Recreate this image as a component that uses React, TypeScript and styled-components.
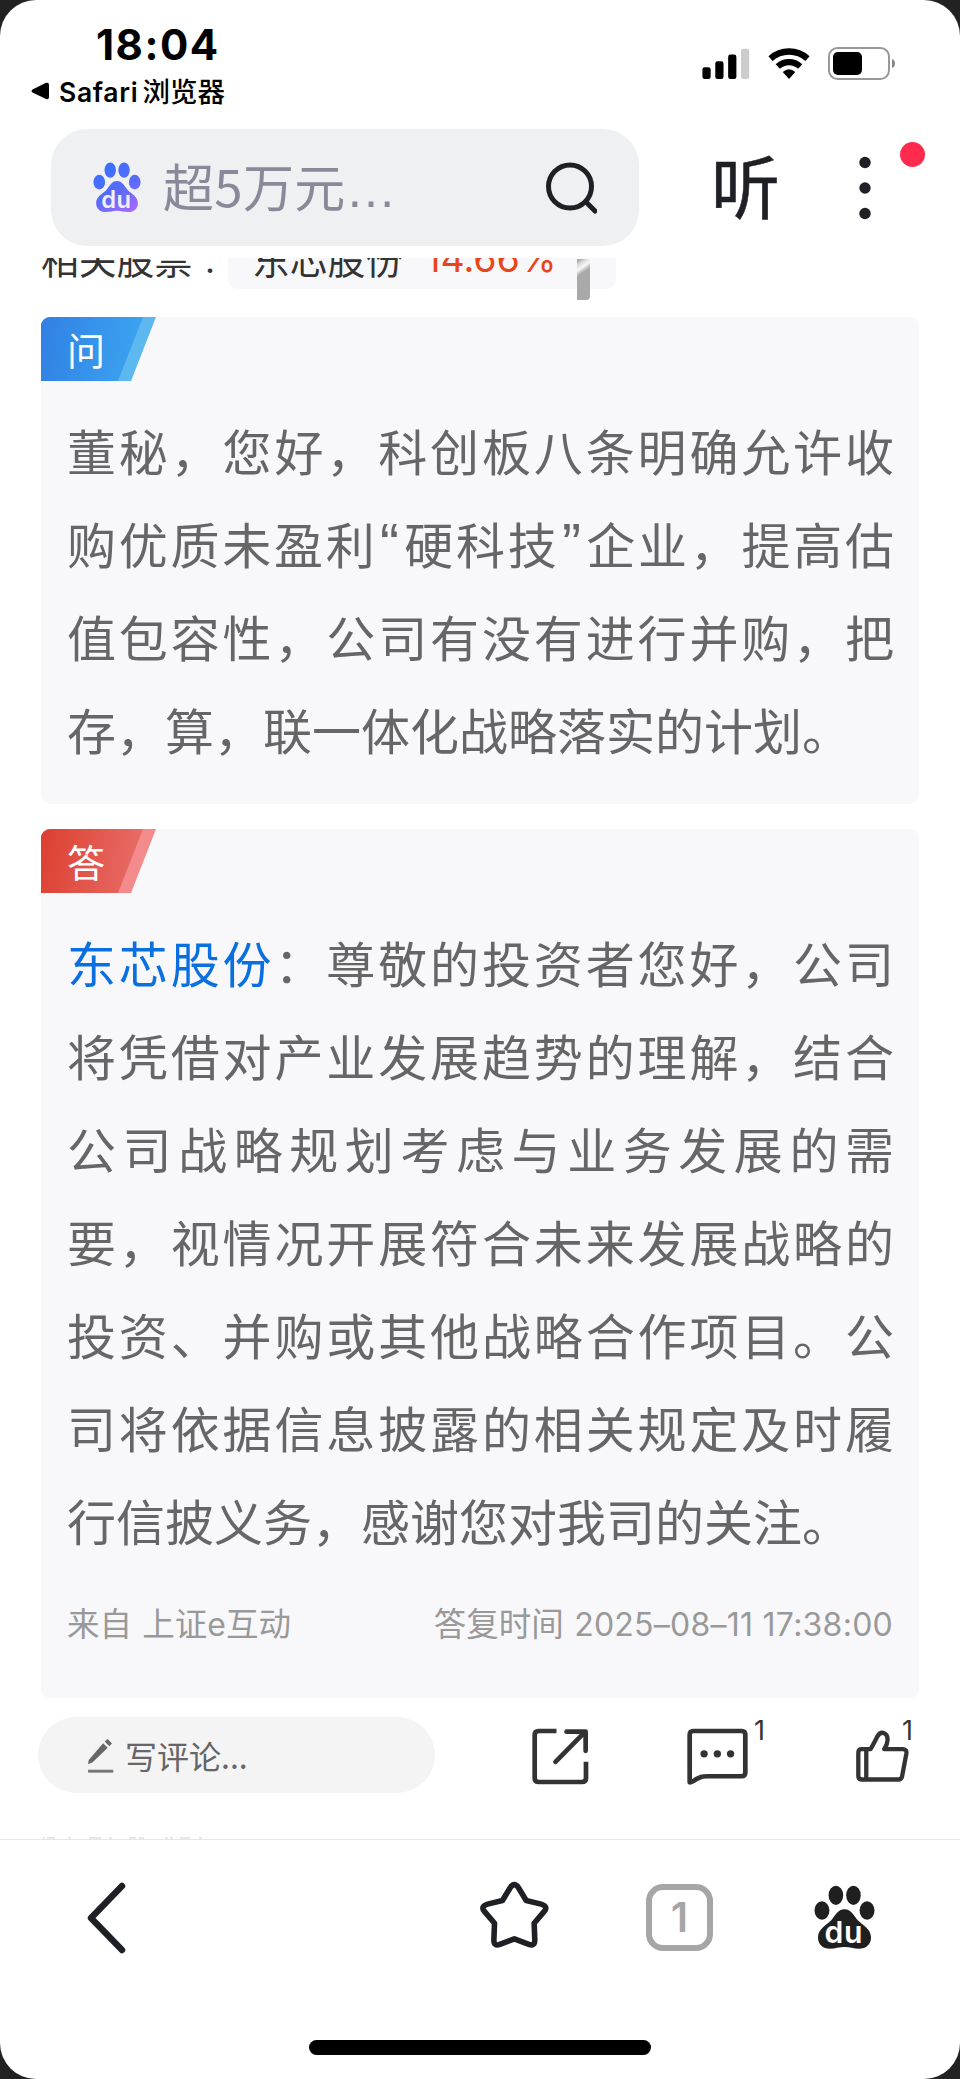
import React from 'react';
import styled, { createGlobalStyle } from 'styled-components';

const cjk = '"Noto Sans CJK SC", sans-serif';
const latin = 'Inter, "Noto Sans CJK SC", sans-serif';

const GlobalStyle = createGlobalStyle`
  * { box-sizing: border-box; }
  body { margin: 0; background: #222; font-family: ${cjk}; }
  svg { display: block; flex: none; }
`;

const Screen = styled.div`
  display: flex;
  flex-direction: column;
  width: 960px;
  height: 2079px;
  border-radius: 36px;
  background: #fff;
  overflow: hidden;
`;

/* ---------- status bar ---------- */

const StatusBar = styled.header`
  display: flex;
  justify-content: space-between;
  height: 129px;
  padding: 24px 65px 0 31px;
  color: #000;
  font-family: ${latin};
`;

const StatusLeft = styled.div`
  display: flex;
  flex-direction: column;
  gap: 10px;
`;

const Clock = styled.div`
  padding-left: 65px;
  font-size: 42px;
  font-weight: 700;
  line-height: 41px;
  letter-spacing: 1.5px;
`;

const BackToApp = styled.div`
  display: flex;
  align-items: center;
  gap: 9px;
  font-size: 26.5px;
  font-weight: 600;
  line-height: 30px;
  letter-spacing: 0.7px;
  white-space: nowrap;
`;

const AppName = styled.span`
  font-family: "Noto Sans CJK SC", sans-serif;
  font-weight: 500;
  font-size: 27.5px;
  margin-left: 4px;
  letter-spacing: 0;
`;

const StatusIcons = styled.div`
  display: flex;
  align-items: center;
  gap: 18px;
  height: 33px;
  margin-top: 23px;
`;

/* ---------- search header ---------- */

const SearchRow = styled.div`
  display: flex;
  align-items: center;
  flex: none;
  height: 117px;
  margin-bottom: 12px;
  padding-left: 51px;
`;

const SearchBox = styled.div`
  display: flex;
  align-items: center;
  width: 588px;
  height: 117px;
  padding: 0 42px;
  border-radius: 36px;
  background: #eff0f2;
`;

const SearchText = styled.span`
  flex: 1;
  margin-left: 22px;
  color: #888a99;
  font-size: 51px;
  line-height: 60px;
  letter-spacing: 0.3px;
`;

const Ellipsis = styled.span`
  font-family: "Liberation Sans", sans-serif;
`;

const Listen = styled.span`
  margin-left: 72px;
  padding-bottom: 7px;
  color: #1f2026;
  font-size: 69px;
  line-height: 80px;
  font-weight: 400;
  -webkit-text-stroke: 0.6px #1f2026;
`;

const Menu = styled.div`
  position: relative;
  margin-left: 79px;
`;

const Badge = styled.i`
  position: absolute;
  left: 41px;
  top: -14px;
  width: 25px;
  height: 25px;
  border-radius: 50%;
  background: #ff2a4d;
`;

/* ---------- article ---------- */

const Article = styled.main`
  display: flex;
  flex-direction: column;
  flex: none;
  height: 1581px;
  padding: 0 41px;
  overflow: hidden;
`;

const Related = styled.div`
  display: flex;
  flex: none;
  height: 59px;
  overflow: hidden;
  color: #333;
  font-size: 37.8px;
  line-height: 57px;
`;

const RelatedLabel = styled.span`
  display: flex;
  width: 187px;
  margin-top: -29px;
  white-space: nowrap;
`;

const Colon = styled.span`
  width: 36px;
  font-family: "Noto Sans CJK TC", sans-serif;
  font-size: 30px;
  line-height: 65px;
  text-align: center;
`;

const StockChip = styled.div`
  display: flex;
  width: 388px;
  height: 60px;
  margin-top: -29px;
  padding-left: 24px;
  border-radius: 10px;
  background: #f8f8fb;
`;

const Change = styled.span`
  margin-left: 22px;
  color: #e8461a;
  font-family: ${latin};
  font-size: 37.5px;
  line-height: 60px;
`;

const ScrollMark = styled.div`
  width: 13px;
  height: 41px;
  margin: 1px 0 0 -39px;
  border-radius: 0 0 4px 0;
  background: linear-gradient(145deg, #aaa 4%, #ddd 14%, #f8f8f8 24%, #ccc 30%, #a9a9a9 36%);
`;

const Card = styled.section`
  flex: none;
  margin-bottom: 25px;
  padding-bottom: 29px;
  border-radius: 9px;
  background: #f8f8fb;
  overflow: hidden;
`;

const tones = {
  ask: { edge: '#5cb8ef', face: 'linear-gradient(100deg, #3180e3, #3ca6f2)' },
  reply: { edge: '#f38b8d', face: 'linear-gradient(100deg, #dc3f30, #e96f6b)' },
};

const Tag = styled.div<{ $tone: 'ask' | 'reply' }>`
  width: 115px;
  height: 64px;
  background: ${p => tones[p.$tone].edge};
  clip-path: polygon(0 0, 100% 0, 90px 100%, 0 100%);
`;

const TagFace = styled.div<{ $tone: 'ask' | 'reply' }>`
  width: 102px;
  height: 64px;
  padding-left: 26px;
  background: ${p => tones[p.$tone].face};
  clip-path: polygon(0 0, 100% 0, 77px 100%, 0 100%);
  color: #fff;
  font-size: 38px;
  line-height: 63px;
`;

const Body = styled.div`
  margin: 22px 25px 0 26px;
  color: #666;
  font-size: 49px;
  line-height: 93px;
`;

const Line = styled.div<{ $last?: boolean }>`
  height: 93px;
  text-align: ${p => (p.$last ? 'left' : 'justify')};
  text-align-last: ${p => (p.$last ? 'left' : 'justify')};
`;

const Quote = styled.span`
  padding: 0 2.5px;
  font-family: "Liberation Sans", sans-serif;
  font-size: 57px;
  line-height: 1;
`;

const Company = styled.span`
  color: #0a70e0;
`;

const Meta = styled.div`
  display: flex;
  justify-content: space-between;
  height: 103px;
  padding: 32px 26px 0;
  color: #999;
  font-size: 32.5px;
  line-height: 48px;
  word-spacing: 3px;
`;

const Roman = styled.span<{ $track?: string }>`
  font-family: Inter, sans-serif;
  font-size: 32px;
  word-spacing: 0;
  letter-spacing: ${p => p.$track ?? '0'};
`;

/* ---------- comment actions ---------- */

const Actions = styled.div`
  display: flex;
  align-items: center;
  flex: none;
  height: 76px;
  margin: -6px 0 0 -3px;
`;

const CommentBox = styled.div`
  display: flex;
  align-items: center;
  width: 397px;
  height: 76px;
  padding-left: 49px;
  border-radius: 38px;
  background: #f4f4f4;
  color: #666;
  font-size: 32px;
  line-height: 48px;
`;

const CommentHint = styled.span`
  margin-left: 11px;
`;

const Action = styled.div<{ $gap: number }>`
  position: relative;
  margin-left: ${p => p.$gap}px;
  padding-top: 2px;
`;

const Count = styled.span<{ $left: number; $top: number }>`
  position: absolute;
  left: ${p => p.$left}px;
  top: ${p => p.$top}px;
  color: #333;
  font-family: Inter, sans-serif;
  font-size: 27px;
  line-height: 30px;
`;

const NextItem = styled.div`
  margin-top: auto;
`;

/* ---------- bottom bar ---------- */

const BottomBar = styled.footer`
  display: flex;
  flex-direction: column;
  justify-content: space-between;
  align-items: center;
  height: 240px;
  padding-bottom: 24px;
  border-top: 1px solid #e6e6e6;
`;

const Nav = styled.nav`
  display: flex;
  align-items: center;
  width: 100%;
  height: 155px;
  padding-left: 86px;
`;

const NavItem = styled.div<{ $gap?: number; $shift?: number }>`
  margin-left: ${p => p.$gap ?? 0}px;
  padding-bottom: ${p => p.$shift ?? 0}px;
`;

const TabCount = styled.div`
  display: flex;
  align-items: center;
  justify-content: center;
  width: 67px;
  height: 67px;
  border: 6px solid #a6a6a6;
  border-radius: 17px;
  color: #a6a6a6;
`;

const TabDigit = styled.span`
  font-family: Inter, sans-serif;
  font-weight: 600;
  font-size: 41px;
  line-height: 41px;
`;

const HomeIndicator = styled.div`
  width: 342px;
  height: 15px;
  border-radius: 8px;
  background: #000;
`;

/* ---------- drawings ---------- */

const Paw = ({ width, fill, ink }: { width: number; fill: string; ink: string }) => (
  <svg width={width} height={(width * 194) / 184} viewBox="0 0 184 194">
    <defs>
      <linearGradient id="pawBlue" gradientUnits="userSpaceOnUse" x1="40" y1="20" x2="140" y2="190">
        <stop offset="0" stopColor="#3a6fff" />
        <stop offset="0.55" stopColor="#5a6bf8" />
        <stop offset="1" stopColor="#a269ff" />
      </linearGradient>
    </defs>
    <g fill={fill}>
      <ellipse cx="66" cy="31" rx="22" ry="29" />
      <ellipse cx="119" cy="31" rx="22" ry="29" />
      <ellipse cx="24" cy="77" rx="22.5" ry="28" />
      <ellipse cx="160" cy="77" rx="22.5" ry="28" />
      <path d="M92 73C72 73 64 92 52 106C38 121 12 131 12 158C12 180 28 192 48 192C65 192 75 187 92 187C109 187 119 192 136 192C156 192 172 180 172 158C172 131 146 121 132 106C120 92 112 73 92 73Z" />
    </g>
    <text x="32" y="175" fontFamily="Inter, sans-serif" fontWeight="600" fontSize="91" textLength="114" fill={ink}>du</text>
  </svg>
);

const Signal = () => (
  <svg width="48" height="31" viewBox="0 0 145 94">
    <rect x="1" y="58" width="25" height="36" rx="7" />
    <rect x="40" y="40" width="25" height="54" rx="7" />
    <rect x="79" y="20" width="25" height="74" rx="7" />
    <rect x="118" y="2" width="25" height="92" rx="7" fill="#ccc" />
  </svg>
);

const Wifi = () => (
  <svg width="42" height="31" viewBox="0 0 124 94">
    <g fill="none" stroke="#000" strokeWidth="19">
      <path d="M6 32A84 84 0 0 1 118 32" />
      <path d="M28 56A50 50 0 0 1 96 56" />
    </g>
    <path d="M62 94L43 73Q62 56 81 73Z" />
  </svg>
);

const Battery = () => (
  <svg width="67" height="33" viewBox="0 0 67 33">
    <rect x="1" y="1" width="60" height="31" rx="8.5" fill="none" stroke="#999" strokeWidth="2" />
    <rect x="5" y="5" width="29" height="23" rx="5" />
    <path d="M64 12Q67 13 67 16.500Q67 20 64 21Z" fill="#888" />
  </svg>
);

const SearchIcon = () => (
  <svg width="52" height="52" viewBox="0 0 52 52" fill="none" stroke="#1f2026" strokeWidth="5" strokeLinecap="round">
    <circle cx="25" cy="24.500" r="21.500" />
    <path d="M41 40L50 49" />
  </svg>
);

const Dots = () => (
  <svg width="12" height="64" viewBox="0 0 12 64" fill="#1f2026">
    <circle cx="6" cy="6.500" r="5.700" />
    <circle cx="6" cy="32" r="5.700" />
    <circle cx="6" cy="57.500" r="5.700" />
  </svg>
);

const Pencil = () => (
  <svg width="27" height="35" viewBox="0 0 80 107" fill="#666">
    <path d="M2 80L4 67L48 16L62 30L16 74Z" />
    <path d="M53 11L62 3L75 17L67 25Z" />
    <path d="M2 97H79V106H2Z" fill="#777" />
  </svg>
);

const Share = () => (
  <svg width="57" height="57" viewBox="0 0 170 170" fill="none" stroke="#333" strokeWidth="14" strokeLinejoin="round">
    <path d="M73 9H20Q8 9 8 21V149Q8 161 20 161H149Q161 161 161 149V101" />
    <path d="M103 11H160V68M70 101L156 14" strokeLinecap="round" />
  </svg>
);

const Bubble = () => (
  <svg width="61" height="57" viewBox="0 0 182 170" fill="none" stroke="#333" strokeWidth="14" strokeLinejoin="round">
    <path d="M8 162V20Q8 9 19 9H163Q174 9 174 20V133Q174 144 163 144H60Q40 144 27 153Q14 162 8 162Z" />
    <g fill="#333" stroke="none">
      <circle cx="51" cy="77" r="11" />
      <circle cx="90.500" cy="77" r="11" />
      <circle cx="130" cy="77" r="11" />
    </g>
  </svg>
);

const Thumb = () => (
  <svg width="53" height="52" viewBox="0 0 160 156" fill="none" stroke="#333" strokeWidth="13" strokeLinejoin="round">
    <path d="M17 57H44Q50 48 64 20Q71 6 82 8Q97 12 95 32Q94 46 85 57H142Q154 58 152 71L139 140Q137 149 128 149H18Q7 149 7 138V68Q7 57 17 57ZM31 58V148" />
  </svg>
);

const Back = () => (
  <svg width="41" height="72" viewBox="0 0 41 72" fill="none" stroke="#1f2026" strokeWidth="6.500" strokeLinecap="round" strokeLinejoin="round">
    <path d="M36 4L5 36L36 68" />
  </svg>
);

const Star = () => (
  <svg width="69" height="67" viewBox="0 0 207 203" fill="none" stroke="#1f2026" strokeWidth="17" strokeLinejoin="round">
    <path d="M67 59L90 21Q103 1 116 21L139 59L184 70Q207 77 193 93L163 128L165 178Q165 199 147 192L103 175L59 192Q41 199 41 178L43 128L13 93Q-1 77 22 70Z" />
  </svg>
);

const BackTriangle = () => (
  <svg width="19" height="18" viewBox="0 0 19 18">
    <path d="M1.500 7.500L15 0.800Q18 0 18 3V15Q18 18 15 17L1.500 10.500Q-0.500 9 1.500 7.500Z" />
  </svg>
);

const NextItemTops = () => (
  <svg width="170" height="2" viewBox="0 0 170 2">
    <path d="M2 1h2M6 1h8M27 1h3M48 1h12M68 1h3M88 1h7M98 1h5M124 1h3M129 1h3M139 1h10M158 1h3" stroke="#d2d2d2" strokeWidth="1.200" />
  </svg>
);

const answerLines = [
  '将凭借对产业发展趋势的理解，结合',
  '公司战略规划考虑与业务发展的需',
  '要，视情况开展符合未来发展战略的',
  '投资、并购或其他战略合作项目。公',
  '司将依据信息披露的相关规定及时履',
];

export default function App() {
  return (
    <Screen>
      <GlobalStyle />
      <StatusBar>
        <StatusLeft>
          <Clock>18:04</Clock>
          <BackToApp>
            <BackTriangle />
            <span>Safari<AppName>浏览器</AppName></span>
          </BackToApp>
        </StatusLeft>
        <StatusIcons>
          <Signal />
          <Wifi />
          <Battery />
        </StatusIcons>
      </StatusBar>

      <SearchRow>
        <SearchBox>
          <Paw width={48} fill="url(#pawBlue)" ink="#eff0f2" />
          <SearchText>超5万元<Ellipsis>…</Ellipsis></SearchText>
          <SearchIcon />
        </SearchBox>
        <Listen>听</Listen>
        <Menu>
          <Dots />
          <Badge />
        </Menu>
      </SearchRow>

      <Article>
        <Related>
          <RelatedLabel>相关股票<Colon>：</Colon></RelatedLabel>
          <StockChip>
            东芯股份
            <Change>14.66%</Change>
          </StockChip>
          <ScrollMark />
        </Related>

        <Card>
          <Tag $tone="ask"><TagFace $tone="ask">问</TagFace></Tag>
          <Body>
            <Line>董秘，您好，科创板八条明确允许收</Line>
            <Line>购优质未盈利<Quote>“</Quote>硬科技<Quote>”</Quote>企业，提高估</Line>
            <Line>值包容性，公司有没有进行并购，把</Line>
            <Line $last>存，算，联一体化战略落实的计划。</Line>
          </Body>
        </Card>

        <Card>
          <Tag $tone="reply"><TagFace $tone="reply">答</TagFace></Tag>
          <Body>
            <Line><Company>东芯股份</Company>：尊敬的投资者您好，公司</Line>
            {answerLines.map(line => <Line key={line}>{line}</Line>)}
            <Line $last>行信披义务，感谢您对我司的关注。</Line>
          </Body>
          <Meta>
            <span>来自 上证<Roman>e</Roman>互动</span>
            <span>答复时间 <Roman $track="0.25px">2025–08–11 17:38:00</Roman></span>
          </Meta>
        </Card>

        <Actions>
          <CommentBox>
            <Pencil />
            <CommentHint>写评论...</CommentHint>
          </CommentBox>
          <Action $gap={97}><Share /></Action>
          <Action $gap={98}><Bubble /><Count $left={67} $top={-10}>1</Count></Action>
          <Action $gap={108}><Thumb /><Count $left={46} $top={-12}>1</Count></Action>
        </Actions>
        <NextItem><NextItemTops /></NextItem>
      </Article>

      <BottomBar>
        <Nav>
          <NavItem><Back /></NavItem>
          <NavItem $gap={353} $shift={6}><Star /></NavItem>
          <NavItem $gap={97}><TabCount><TabDigit>1</TabDigit></TabCount></NavItem>
          <NavItem $gap={101}><Paw width={61} fill="#1f1f1f" ink="#fff" /></NavItem>
        </Nav>
        <HomeIndicator />
      </BottomBar>
    </Screen>
  );
}
